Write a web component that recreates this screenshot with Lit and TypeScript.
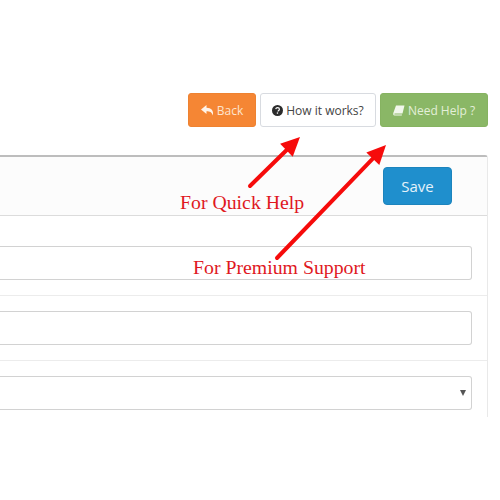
import { LitElement, html, css, svg } from "lit";
import { customElement } from "lit/decorators.js";

// annotation arrows, drawn on top of the page: [x1, y1, x2, y2]
const ARROWS = [
  [250, 186, 300, 137],
  [277, 258, 386, 145],
];

@customElement("app-root")
export class AppRoot extends LitElement {
  static styles = css`
    :host {
      display: block;
      position: relative;
      width: 500px;
      height: 500px;
      overflow: hidden;
      background: #fff;
      font-family: "Open Sans", sans-serif;
      color: #555;
    }
    .toolbar {
      display: flex;
      justify-content: flex-end;
      gap: 4px;
      padding: 93px 12px 0 0;
    }
    .btn {
      display: flex;
      align-items: center;
      justify-content: center;
      gap: 3px;
      box-sizing: border-box;
      height: 34px;
      border-radius: 3px;
      border: 1px solid transparent;
      font-size: 12px;
    }
    .back {
      width: 68px;
      background: #f58634;
      border-color: #ee8231;
      color: #fde4cf;
    }
    .how {
      width: 116px;
      background: #fff;
      border-color: #d8dbe0;
      color: #444;
    }
    .need {
      width: 108px;
      background: #8ab766;
      border-color: #86b361;
      color: #e3efd9;
    }
    .panel {
      box-sizing: border-box;
      width: 488px;
      height: 262px;
      margin-top: 28px;
      border-top: 2px solid #bdbdbd;
      border-right: 1px solid #e9e9e9;
      border-radius: 0 3px 0 0;
    }
    .panel-head {
      display: flex;
      justify-content: flex-end;
      box-sizing: border-box;
      height: 59px;
      padding: 10px 35px 0 0;
      background: #fcfcfc;
      border-bottom: 1px solid #dcdcdc;
    }
    .save {
      box-sizing: border-box;
      width: 69px;
      height: 38px;
      border-radius: 4px;
      background: #1f8fcd;
      border: 1px solid #1c84bd;
      color: #e4f2fa;
      font-size: 15px;
      display: flex;
      align-items: center;
      justify-content: center;
    }
    .row {
      box-sizing: border-box;
      padding-right: 15px;
      border-bottom: 1px solid #ececec;
    }
    .row.first {
      height: 80px;
      padding-top: 30px;
    }
    .row.next {
      height: 65px;
      padding-top: 15px;
    }
    .row:last-child {
      border-bottom: none;
    }
    .field {
      box-sizing: border-box;
      height: 34px;
      background: #fff;
      border: 1px solid #d2d2d2;
      border-left: none;
      border-radius: 0 3px 3px 0;
      display: flex;
      align-items: center;
      justify-content: flex-end;
      padding-right: 5px;
    }
    .caret {
      width: 0;
      height: 0;
      border-left: 3.5px solid transparent;
      border-right: 3.5px solid transparent;
      border-top: 6px solid #555;
    }
    .notes {
      position: absolute;
      inset: 0;
      pointer-events: none;
    }
    .note {
      position: absolute;
      color: #e0181e;
      font-family: "Liberation Serif", serif;
      font-size: 19.8px;
      line-height: 22px;
      white-space: nowrap;
    }
    .quick {
      left: 180px;
      top: 191px;
    }
    .premium {
      left: 193px;
      top: 256px;
    }
    svg.arrows {
      position: absolute;
      inset: 0;
    }
    svg.icon {
      display: block;
    }
  `;

  private arrow([x1, y1, x2, y2]: number[]) {
    const a = Math.atan2(y2 - y1, x2 - x1);
    const len = 19;
    const spread = 9;
    const bx = x2 - len * Math.cos(a);
    const by = y2 - len * Math.sin(a);
    const nx = -Math.sin(a) * spread;
    const ny = Math.cos(a) * spread;
    return svg`
      <line x1=${x1} y1=${y1} x2=${bx} y2=${by} stroke="#f60b0b" stroke-width="4" stroke-linecap="round"></line>
      <polygon points="${x2},${y2} ${bx + nx},${by + ny} ${bx - nx},${by - ny}" fill="#f60b0b"></polygon>`;
  }

  render() {
    return html`
      <div class="toolbar">
        <div class="btn back">
          <svg class="icon" width="13" height="11" viewBox="0 0 13 11">
            <path d="M5.5 0 0 4.5 5.5 9V6.2c3.4 0 5.4.9 6.3 4.3C13 5.500 10.300 2.800 5.500 2.700z" fill="#fff3e8"></path>
          </svg>
          Back
        </div>
        <div class="btn how">
          <svg class="icon" width="11" height="11" viewBox="0 0 11 11">
            <circle cx="5.500" cy="5.500" r="5.500" fill="#2b2b2b"></circle>
            <path d="M3.700 4.200C3.900 3.200 4.600 2.700 5.600 2.700c1.100 0 1.800.6 1.800 1.500 0 1.300-1.400 1.200-1.400 2.300" fill="none" stroke="#fff" stroke-width="1.200"></path>
            <rect x="4.800" y="7.400" width="1.300" height="1.300" fill="#fff"></rect>
          </svg>
          How it works?
        </div>
        <div class="btn need">
          <svg class="icon" width="12" height="11" viewBox="0 0 12 11">
            <path d="M3 .5h8.500L9.500 8.500H1.800c-.5 0-.8.800-.2 1H9l-.2 1H1.500C.3 10.500 0 9.300.300 8z" fill="#f1f7ec"></path>
          </svg>
          Need Help ?
        </div>
      </div>
      <div class="panel">
        <div class="panel-head"><div class="save">Save</div></div>
        <div class="row first"><div class="field"></div></div>
        <div class="row next"><div class="field"></div></div>
        <div class="row next"><div class="field"><span class="caret"></span></div></div>
      </div>
      <div class="notes">
        <svg class="arrows" width="500" height="500">${ARROWS.map((a) => this.arrow(a))}</svg>
        <div class="note quick">For Quick Help</div>
        <div class="note premium">For Premium Support</div>
      </div>
    `;
  }
}
